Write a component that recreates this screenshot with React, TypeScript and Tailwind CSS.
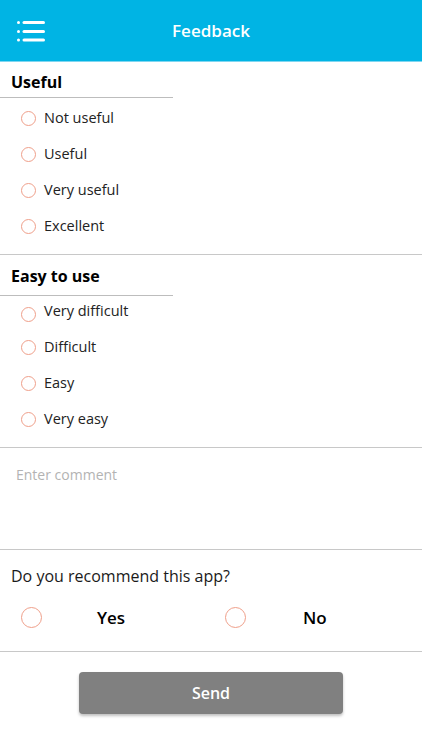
import React from "react";

const font = { fontFamily: '"Open Sans", "Noto Sans", sans-serif' };

function Radio({ big }: { big?: boolean }) {
  return (
    <span
      className={
        big
          ? "block w-[21px] h-[21px] rounded-full border-[1.5px] border-[#ef9f8a] shrink-0"
          : "block w-[15px] h-[15px] rounded-full border border-[#ef9f8a] shrink-0"
      }
    />
  );
}

function MenuIcon() {
  return (
    <svg width="30" height="24" viewBox="0 0 30 24" fill="#ffffff">
      <rect x="0" y="1" width="3" height="3" rx="1.5" />
      <rect x="0" y="10" width="3" height="3" rx="1.5" />
      <rect x="0" y="18.5" width="3" height="3" rx="1.5" />
      <rect x="5.5" y="1" width="22.5" height="3" rx="1.5" />
      <rect x="5.5" y="10" width="22.5" height="3" rx="1.5" />
      <rect x="5.5" y="18.5" width="22.5" height="3" rx="1.5" />
    </svg>
  );
}

function App() {
  const useful = ["Not useful", "Useful", "Very useful", "Excellent"];
  const easy = ["Very difficult", "Difficult", "Easy", "Very easy"];

  return (
    <div className="w-[422px] h-[750px] bg-white text-[#1a1a1a] overflow-hidden" style={font}>
      {/* Header */}
      <div className="h-[62px] bg-[#00b4e4] relative flex items-center justify-center border-b border-[#7fd6f0]">
        <div className="absolute left-[17px] top-[20px]">
          <MenuIcon />
        </div>
        <span className="text-white text-[17px] font-semibold">Feedback</span>
      </div>

      {/* Useful */}
      <div className="border-b border-[#c8c8c8] pb-[10px]">
        <div className="h-[36px] flex items-end pb-[4px] pl-[11px] w-[173px] border-b border-[#bdbdbd]">
          <span className="text-[16px] font-bold text-black leading-[22px]">Useful</span>
        </div>
        <div className="pt-[2px]">
          {useful.map((t) => (
            <div key={t} className="h-[36px] flex items-center pl-[21px] gap-[8px]">
              <Radio />
              <span className="text-[14.5px] text-[#222]">{t}</span>
            </div>
          ))}
        </div>
      </div>

      {/* Easy to use */}
      <div className="border-b border-[#c8c8c8] pb-[10px]">
        <div className="h-[41px] flex items-end pb-[8px] pl-[11px] w-[173px] border-b border-[#bdbdbd]">
          <span className="text-[16px] font-bold text-black leading-[22px]">Easy to use</span>
        </div>
        <div className="-mt-[3px]">
          {easy.map((t, i) => (
            <div key={t} className="h-[36px] flex items-center pl-[21px] gap-[8px]">
              <span className={i === 0 ? "mt-[7px]" : ""}>
                <Radio />
              </span>
              <span className="text-[14.5px] text-[#222]">{t}</span>
            </div>
          ))}
        </div>
      </div>

      {/* Comment */}
      <div className="h-[102px] border-b border-[#c8c8c8] px-[16px] pt-[17px]">
        <textarea
          placeholder="Enter comment"
          className="w-full h-[70px] resize-none outline-none text-[14px] leading-[20px] placeholder:text-[#b3b3b3] bg-transparent"
          style={font}
        />
      </div>

      {/* Recommend */}
      <div className="h-[102px] border-b border-[#c8c8c8]">
        <div className="pt-[15px] pl-[11px] text-[16px] text-[#1a1a1a] leading-[22px]">
          Do you recommend this app?
        </div>
        <div className="flex items-center mt-[18px] pl-[21px]">
          <div className="flex items-center w-[204px]">
            <Radio big />
            <span className="ml-[55px] text-[17px] font-semibold text-black">Yes</span>
          </div>
          <div className="flex items-center">
            <Radio big />
            <span className="ml-[57px] text-[17px] font-semibold text-black">No</span>
          </div>
        </div>
      </div>

      {/* Send */}
      <div className="flex justify-center pt-[20px]">
        <button
          className="w-[264px] h-[42px] rounded-[4px] bg-[#808080] text-white text-[16px] font-semibold shadow-[0_2px_3px_rgba(0,0,0,0.25)]"
          style={font}
        >
          Send
        </button>
      </div>
    </div>
  );
}

export default App;
